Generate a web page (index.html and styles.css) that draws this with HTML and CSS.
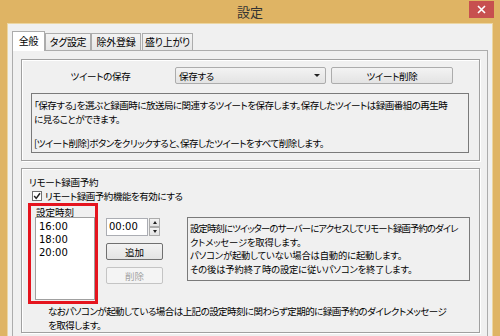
FILE: index.html
```html
<!DOCTYPE html>
<html lang="ja">
<head>
  <meta charset="UTF-8">
  <title>設定</title>
  <link rel="stylesheet" href="styles.css">
</head>
<body>
  <div class="titlebar">
    <span></span>
    <span class="title">設定</span>
    <button class="close" aria-label="閉じる">
      <svg width="9" height="9" viewBox="0 0 9 9"><path d="M1 1 L8 8 M8 1 L1 8" stroke="#fff" stroke-width="1.6"/></svg>
    </button>
  </div>
  <div class="client">
    <div class="tabs">
      <div class="tab active">全般</div>
      <div class="tab">タグ設定</div>
      <div class="tab">除外登録</div>
      <div class="tab">盛り上がり</div>
    </div>
    <div class="page">
      <div class="group tweet-group">
        <div class="save-row">
          <span class="save-label">ツイートの保存</span>
          <div class="combo"><span>保存する</span><span class="arrow"></span></div>
          <button class="btn del-tweet">ツイート削除</button>
        </div>
        <div class="text-box save-note">
          <p>「保存する」を選ぶと録画時に放送局に関連するツイートを保存します。保存したツイートは録画番組の再生時<br>に見ることができます。</p>
          <p>[ツイート削除]ボタンをクリックすると、保存したツイートをすべて削除します。</p>
        </div>
      </div>

      <div class="group remote-group">
        <div class="group-title">リモート録画予約</div>
        <label class="check-row">
          <span class="check">
            <svg width="10" height="10" viewBox="0 0 10 10"><rect x="0.5" y="0.5" width="9" height="9" fill="#fff" stroke="#707070"/><path d="M2.2 5 L4.2 7.4 L8 2.2" fill="none" stroke="#222" stroke-width="1.5"/></svg>
          </span>
          リモート録画予約機能を有効にする
        </label>
        <div class="schedule">
          <div class="mark">
            <div class="list-label">設定時刻</div>
            <ul class="time-list">
              <li>16:00</li>
              <li>18:00</li>
              <li>20:00</li>
            </ul>
          </div>
          <div class="time-controls">
            <div class="spin">
              <span class="spin-value">00:00</span>
              <span class="spin-btns">
                <span class="spin-btn"><span class="tri up"></span></span>
                <span class="spin-btn"><span class="tri down"></span></span>
              </span>
            </div>
            <button class="btn small">追加</button>
            <button class="btn small" disabled>削除</button>
          </div>
          <div class="text-box info-box"><span class="tight">設定時刻にツイッターのサーバーにアクセスしてリモート録画予約のダイレ</span><br>クトメッセージを取得します。<br>パソコンが起動していない場合は自動的に起動します。<br>その後は予約終了時の設定に従いパソコンを終了します。</div>
        </div>
        <p class="footnote">なおパソコンが起動している場合は上記の設定時刻に関わらず定期的に録画予約のダイレクトメッセージ<br>を取得します。</p>
      </div>
    </div>
  </div>
</body>
</html>
```

FILE: styles.css
```css
body {
  margin: 0;
  width: 500px;
  height: 336px;
  overflow: hidden;
  background-color: #dfb464;
  font-family: "Noto Sans CJK JP", "Noto Sans", sans-serif;
  font-size: 9.5px;
  font-feature-settings: "palt";
  letter-spacing: -0.3px;
  color: #000;
}
button {
  font-family: inherit;
  font-size: inherit;
  font-feature-settings: inherit;
  letter-spacing: inherit;
  color: inherit;
  padding: 0;
}
.titlebar {
  height: 24px;
  display: grid;
  grid-template-columns: 1fr auto 1fr;
}
.title {
  font-size: 13px;
  line-height: 24px;
  letter-spacing: 0;
  color: #333;
}
.close {
  justify-self: end;
  align-self: start;
  width: 25px;
  height: 17px;
  margin: 1px 6px 0 0;
  border: none;
  background-color: #c7504f;
  display: flex;
  align-items: center;
  justify-content: center;
}
.client {
  margin: 0 8px;
  height: 312px;
  overflow: hidden;
  background-color: #f0f0f0;
  box-shadow: 0 0 0 1px #ecd6a2;
}
/* タブ */
.tabs {
  display: flex;
  align-items: flex-end;
  height: 19px;
  padding: 7px 0 0 4px;
  font-size: 10px;
}
.tab {
  box-sizing: border-box;
  height: 17px;
  line-height: 15px;
  text-align: center;
  border: 1px solid #acacac;
  border-bottom: none;
  background: linear-gradient(#f3f3f3, #e6e6e6);
}
.tab:nth-child(1) { width: 33px; }
.tab:nth-child(2) { width: 46px; }
.tab:nth-child(3) { width: 50px; }
.tab:nth-child(4) { width: 51px; margin-left: 1px; }
.tab.active {
  position: relative;
  z-index: 1;
  height: 20px;
  line-height: 18px;
  margin-bottom: -1px;
  background: #fff;
}
.page {
  margin: 0 4px;
  height: 290px;
  border: 1px solid #acacac;
  padding: 8px 7px 8px 8px;
  background-color: #f0f0f0;
}
.group {
  box-sizing: border-box;
  border: 1px solid #a0a0a0;
  box-shadow: inset 1px 1px 0 #fff, 1px 1px 0 #fff;
}
.tweet-group {
  height: 102px;
  padding: 7px 0 0 9px;
}
.save-row {
  display: flex;
  align-items: center;
  height: 17px;
}
.save-label {
  width: 139px;
  text-align: center;
}
.combo {
  box-sizing: border-box;
  width: 151px;
  height: 17px;
  margin-left: 5px;
  padding: 0 5px 0 3px;
  display: flex;
  align-items: center;
  justify-content: space-between;
  border: 1px solid #acacac;
  border-radius: 2px;
  background: linear-gradient(#f3f3f3, #e3e3e3);
}
.arrow {
  width: 0;
  height: 0;
  border-left: 3px solid transparent;
  border-right: 3px solid transparent;
  border-top: 3px solid #222;
}
.btn {
  box-sizing: border-box;
  height: 17px;
  border: 1px solid #acacac;
  border-radius: 2px;
  background: linear-gradient(#f3f3f3, #e3e3e3);
}
.del-tweet {
  width: 122px;
  margin-left: 5px;
}
.text-box {
  box-sizing: border-box;
  border: 1px solid #7a7a7a;
  white-space: nowrap;
}
.save-note {
  width: 438px;
  height: 60px;
  margin-top: 9px;
  padding: 4px 0 0 2px;
  line-height: 14.2px;
  letter-spacing: -0.5px;
}
.save-note p {
  margin: 0;
}
.save-note p + p {
  margin-top: 9.6px;
}
.remote-group {
  height: 165px;
  margin-top: 7px;
  padding: 6px 0 0 7px;
}
.group-title {
  line-height: 14px;
}
.check-row {
  display: flex;
  align-items: center;
  height: 14px;
  margin-left: 3px;
  letter-spacing: -0.45px;
}
.check {
  display: flex;
  margin-right: 3px;
}
.schedule {
  display: flex;
  align-items: flex-start;
}
.mark {
  box-sizing: border-box;
  width: 70px;
  height: 101px;
  margin-left: -1px;
  border: 3px solid #e5141e;
  padding: 0 0 0 4px;
}
.list-label {
  line-height: 11px;
  margin: 1px 0 0 1px;
  letter-spacing: 0;
}
.time-list {
  box-sizing: border-box;
  list-style: none;
  width: 60px;
  height: 83px;
  margin: -1px 0 0 0;
  padding: 2px 0 0 3px;
  border: 1px solid #a0a0a0;
  background: #fff;
  line-height: 13px;
  font-family: "DejaVu Sans", sans-serif;
  font-size: 10px;
  letter-spacing: 0;
}
.time-controls {
  display: flex;
  flex-direction: column;
  gap: 7px;
  margin: 15px 0 0 8px;
}
.spin {
  display: flex;
  height: 18px;
}
.spin-value {
  box-sizing: border-box;
  width: 42px;
  border: 1px solid #abadb3;
  background: #fff;
  padding-left: 2px;
  line-height: 16px;
  font-family: "DejaVu Sans", sans-serif;
  font-size: 10px;
  letter-spacing: 0;
}
.spin-btns {
  display: flex;
  flex-direction: column;
  width: 11px;
  margin-left: 1px;
}
.spin-btn {
  box-sizing: border-box;
  height: 9px;
  border: 1px solid #acacac;
  background: linear-gradient(#f3f3f3, #e3e3e3);
  display: flex;
  align-items: center;
  justify-content: center;
}
.tri {
  width: 0;
  height: 0;
  border-left: 2.5px solid transparent;
  border-right: 2.5px solid transparent;
}
.tri.up { border-bottom: 3px solid #222; }
.tri.down { border-top: 3px solid #222; }
.btn.small {
  width: 57px;
  letter-spacing: 0;
}
.btn.small:first-of-type {
  border-color: #707070;
}
.btn:disabled {
  color: #a3a3a3;
  border-color: #c4c4c4;
  background: #f4f4f4;
}
.info-box {
  width: 283px;
  height: 64px;
  margin: 14px 0 0 24px;
  padding: 4px 0 0 2px;
  font-size: 9.3px;
  line-height: 13.5px;
  letter-spacing: -0.15px;
}
.info-box .tight {
  letter-spacing: -0.8px;
}
.footnote {
  margin: 0 0 0 19px;
  line-height: 14px;
  letter-spacing: -0.55px;
  white-space: nowrap;
}
```
